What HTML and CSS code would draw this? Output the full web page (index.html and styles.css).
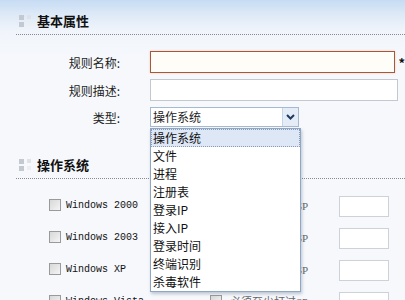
FILE: index.html
```html
<!DOCTYPE html>
<html lang="zh-CN">
<head>
    <meta charset="UTF-8">
    <title>规则设置</title>
    <link rel="stylesheet" href="styles.css">
</head>
<body>
    <div class="section-title"><span class="grip"><i></i><i></i><i></i><i></i></span>基本属性</div>

    <div class="form">
        <label class="form-label">规则名称:</label>
        <div class="field"><input class="text-input required" type="text"><span class="star">*</span></div>

        <label class="form-label">规则描述:</label>
        <div class="field"><input class="text-input" type="text"></div>

        <label class="form-label">类型:</label>
        <div class="field">
            <div class="select">
                <span class="select-value">操作系统</span>
                <span class="select-arrow">
                    <svg width="9" height="6" viewBox="0 0 9 6"><path d="M1 1 L4.5 4.5 L8 1" fill="none" stroke="#1f3a5f" stroke-width="2"/></svg>
                </span>
                <ul class="dropdown">
                    <li class="selected">操作系统</li>
                    <li>文件</li>
                    <li>进程</li>
                    <li>注册表</li>
                    <li>登录IP</li>
                    <li>接入IP</li>
                    <li>登录时间</li>
                    <li>终端识别</li>
                    <li>杀毒软件</li>
                </ul>
            </div>
        </div>
    </div>

    <div class="section-title second"><span class="grip"><i></i><i></i><i></i><i></i></span>操作系统</div>

    <div class="os-list">
        <div class="os-row">
            <span class="checkbox"></span><span class="os-name">Windows 2000</span>
            <span class="checkbox"></span><span class="sp-text">必须至少打过SP</span>
            <input class="sp-input" type="text">
        </div>
        <div class="os-row">
            <span class="checkbox"></span><span class="os-name">Windows 2003</span>
            <span class="checkbox"></span><span class="sp-text">必须至少打过SP</span>
            <input class="sp-input" type="text">
        </div>
        <div class="os-row">
            <span class="checkbox"></span><span class="os-name">Windows XP</span>
            <span class="checkbox"></span><span class="sp-text">必须至少打过SP</span>
            <input class="sp-input" type="text">
        </div>
        <div class="os-row">
            <span class="checkbox"></span><span class="os-name">Windows Vista</span>
            <span class="checkbox"></span><span class="sp-text">必须至少打过SP</span>
            <input class="sp-input" type="text">
        </div>
    </div>
</body>
</html>
```

FILE: styles.css
```css
body {
    margin: 0;
    font-family: "Noto Sans CJK SC", "Noto Sans", sans-serif;
    font-size: 12px;
    color: #222;
    background: linear-gradient(#c6dbf3 0px, #dde9f7 14px, #f1f5fb 32px, #f6f8fc 60px);
    background-color: #f6f8fc;
    height: 300px;
    overflow: hidden;
    padding-top: 8px;
    box-sizing: border-box;
}
.section-title {
    position: relative;
    height: 26px;
    line-height: 26px;
    margin-left: 16px;
    padding-left: 21px;
    border-bottom: 1px dotted #8a8a8a;
    font-size: 13px;
    font-weight: bold;
    color: #111;
}
.section-title.second {
    margin-top: 25px;
}
.grip {
    position: absolute;
    left: 3px;
    top: 7px;
    display: grid;
    grid-template-columns: 5px 4px;
    gap: 2px 3px;
}
.grip i {
    display: block;
    width: 5px;
    height: 5px;
    background: #c4c9d1;
}
.grip i:nth-child(2) {
    width: 4px;
    height: 4px;
    background: #dfe2e7;
}
.grip i:nth-child(4) {
    width: 4px;
    height: 4px;
    background: #eceef1;
}
.form {
    display: grid;
    grid-template-columns: 120px 255px;
    column-gap: 30px;
    row-gap: 6px;
    margin-top: 16px;
    align-items: center;
}
.form-label {
    text-align: right;
}
.field {
    display: flex;
    align-items: center;
}
.text-input {
    width: 248px;
    height: 22px;
    box-sizing: border-box;
    border: 1px solid #c3c8cf;
    background: #fff;
    margin: 0;
    padding: 0 3px;
}
.text-input.required {
    border-color: #a8583a;
    background: #fffdf8;
    box-shadow: 0 0 2px #f6c9b4;
}
.star {
    margin-left: 3px;
    font-weight: bold;
    font-size: 13px;
    color: #111;
}
.select {
    position: relative;
    width: 149px;
    height: 20px;
    box-sizing: border-box;
    border: 1px solid #a5b9d0;
    background: #fff;
    display: flex;
    align-items: center;
}
.select-value {
    flex: 1;
    padding-left: 2px;
    line-height: 18px;
}
.select-arrow {
    width: 15px;
    height: 18px;
    background: #e3ecf7;
    border-left: 1px solid #c5d4e6;
    display: flex;
    align-items: center;
    justify-content: center;
}
.dropdown {
    position: absolute;
    top: 20px;
    left: -1px;
    width: 149px;
    margin: 0;
    padding: 0;
    list-style: none;
    background: #fff;
    border: 1px solid #8fa7c2;
    box-shadow: 1px 2px 3px rgba(80, 100, 130, 0.35);
    z-index: 10;
}
.dropdown li {
    height: 18px;
    line-height: 18px;
    padding-left: 2px;
    box-sizing: border-box;
    color: #111;
}
.dropdown li.selected {
    background: #dde7f5;
    outline: 1px dotted #8a9bb5;
    outline-offset: -1px;
}
.os-list {
    margin-top: 17px;
    display: flex;
    flex-direction: column;
    gap: 11px;
}
.os-row {
    display: grid;
    grid-template-columns: 17px 144px 20px 109px 50px;
    padding-left: 49px;
    height: 21px;
    align-items: center;
}
.checkbox {
    width: 12px;
    height: 12px;
    box-sizing: border-box;
    border: 1px solid #9a9a9a;
    background: linear-gradient(135deg, #d8d8d8, #f4f4f4);
    margin-top: -3px;
}
.os-name {
    font-family: "Liberation Mono", monospace;
    font-size: 10px;
    color: #111;
    margin-top: -3px;
}
.sp-text {
    font-size: 11px;
    color: #666;
    font-family: "Liberation Serif", "Noto Sans CJK SC", serif;
    margin-top: -3px;
}
.sp-input {
    width: 50px;
    height: 21px;
    box-sizing: border-box;
    border: 1px solid #cdd2d8;
    background: #fff;
    margin: 0;
}
```
